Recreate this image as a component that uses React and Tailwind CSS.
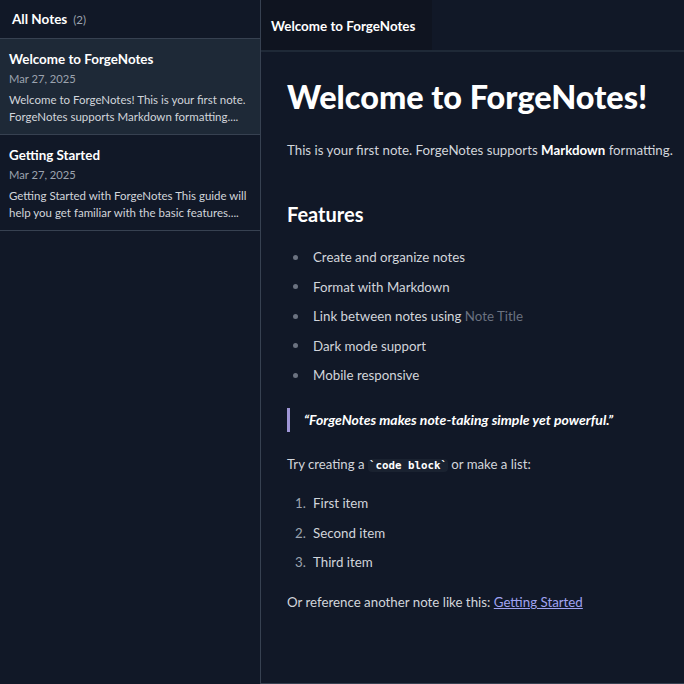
import React from 'react'

const notes = [
  {
    id: 1,
    title: 'Welcome to ForgeNotes',
    date: 'Mar 27, 2025',
    excerpt: 'Welcome to ForgeNotes! This is your first note. ForgeNotes supports Markdown formatting....',
    active: true,
  },
  {
    id: 2,
    title: 'Getting Started',
    date: 'Mar 27, 2025',
    excerpt: 'Getting Started with ForgeNotes This guide will help you get familiar with the basic features....',
    active: false,
  },
]

const features = [
  'Create and organize notes',
  'Format with Markdown',
  null,
  'Dark mode support',
  'Mobile responsive',
]

export default function App() {
  return (
    <div
      className="flex h-[684px] w-[684px] overflow-hidden bg-[#111827] text-[#d1d5db]"
      style={{ fontFamily: 'Lato, "Noto Sans", sans-serif' }}
    >
      {/* Sidebar */}
      <aside className="flex w-[261px] shrink-0 flex-col border-r border-[#374151] bg-[#111827]">
        <div className="flex h-[39px] items-center gap-[6px] border-b border-[#374151] px-3 pt-[1px]">
          <span className="text-[13.5px] font-bold text-white">All Notes</span>
          <span className="text-[11.5px] text-[#9ca3af]">(2)</span>
        </div>
        {notes.map((note) => (
          <div
            key={note.id}
            className={`h-[96px] border-b border-[#374151] px-[9px] pt-[11px] ${
              note.active ? 'bg-[#1e2937]' : ''
            }`}
          >
            <div className="text-[13.4px] font-bold leading-[18px] text-white">{note.title}</div>
            <div className="mt-[3px] text-[11.2px] leading-[16px] text-[#9ca3af]">{note.date}</div>
            <div className="mt-[4px] text-[11.5px] leading-[17px] text-[#d1d5db]">{note.excerpt}</div>
          </div>
        ))}
      </aside>

      {/* Main */}
      <main className="flex min-w-0 flex-1 flex-col border-b border-[#374151]">
        <div className="flex h-[52px] shrink-0 border-b-2 border-[#1f2937]">
          <div className="flex h-full items-center bg-[#0f1420] pl-[10px] pr-[17px] pt-[2px]">
            <span className="text-[13.4px] font-bold text-white">Welcome to ForgeNotes</span>
          </div>
        </div>

        <div className="flex-1 pl-[26px] pr-[8px] pt-[26px]">
          <h1 className="text-[32.4px] font-black leading-[38px] text-white">
            Welcome to ForgeNotes!
          </h1>
          <p className="mt-[23px] text-[13.3px] leading-[22px]">
            This is your first note. ForgeNotes supports <strong className="font-bold text-white">Markdown</strong> formatting.
          </p>

          <h2 className="mt-[39px] text-[20px] font-bold leading-[28px] text-white">Features</h2>

          <ul className="mt-[18px] flex flex-col gap-[7.5px] pl-[6px]">
            {features.map((f, i) => (
              <li key={i} className="flex items-center text-[13.3px] leading-[22px]">
                <span className="mr-[15px] h-[5px] w-[5px] rounded-full bg-[#6b7280]" />
                {f === null ? (
                  <span>
                    Link between notes using <span className="text-[#6b7280]">Note Title</span>
                  </span>
                ) : (
                  <span>{f}</span>
                )}
              </li>
            ))}
          </ul>

          <blockquote className="mt-[22px] border-l-[3px] border-[#9f96d6] py-[1px] pl-[14px]">
            <p className="text-[14px] font-bold italic leading-[22px] text-white">
              “ForgeNotes makes note-taking simple yet powerful.”
            </p>
          </blockquote>

          <p className="mt-[21px] text-[13.2px] leading-[22px]">
            Try creating a{' '}
            <code
              className="rounded bg-[#1a2230] px-[1px] text-[10.8px] font-bold text-white"
              style={{ fontFamily: '"DejaVu Sans Mono", monospace' }}
            >
              `code block`
            </code>{' '}
            or make a list:
          </p>

          <ol className="mt-[15px] flex flex-col gap-[7.5px] pl-[8px]">
            {['First item', 'Second item', 'Third item'].map((item, i) => (
              <li key={item} className="flex text-[13.3px] leading-[22px]">
                <span className="w-[18px] text-[#9ca3af]">{i + 1}.</span>
                <span>{item}</span>
              </li>
            ))}
          </ol>

          <p className="mt-[18px] text-[13.3px] leading-[22px]">
            Or reference another note like this:{' '}
            <a className="text-[#a0a3f2] underline" href="#">Getting Started</a>
          </p>
        </div>
      </main>
    </div>
  )
}
